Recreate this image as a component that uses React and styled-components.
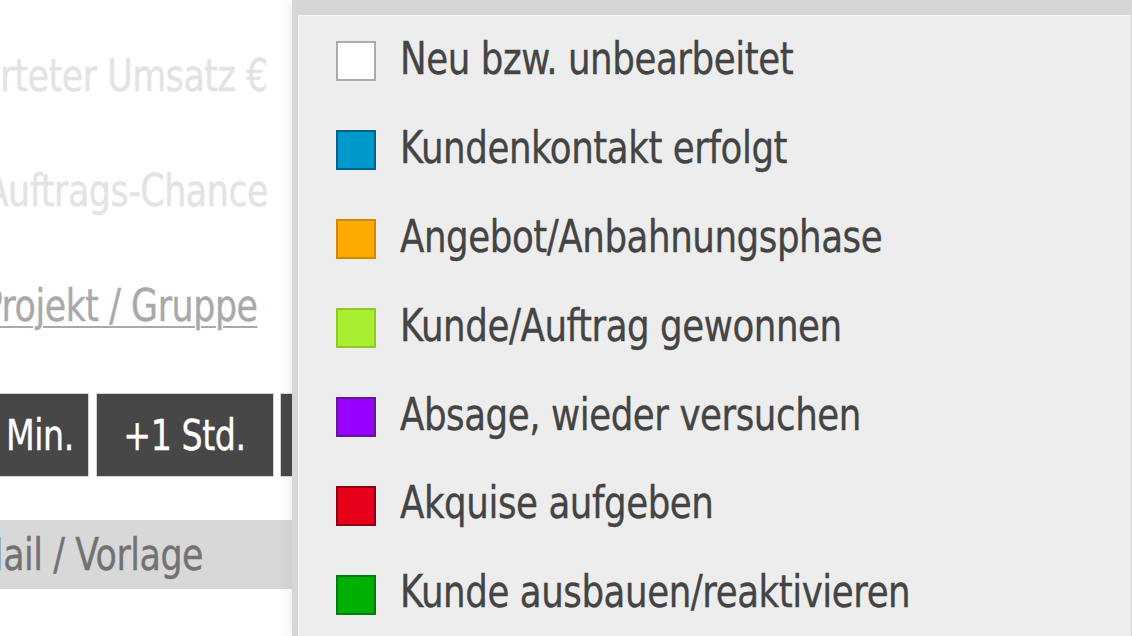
import React from "react";
import styled, { createGlobalStyle } from "styled-components";

const Global = createGlobalStyle`
  html, body { margin: 0; padding: 0; background: #ffffff; }
  body { font-family: "DejaVu Sans Condensed", "DejaVu Sans", sans-serif; font-stretch: condensed; }
`;

const Page = styled.div`
  position: relative;
  width: 1132px;
  height: 636px;
  overflow: hidden;
  background: #ffffff;
`;

const LeftPane = styled.div`
  width: 292px;
  height: 100%;
  overflow: hidden;
  display: flex;
  flex-direction: column;
  padding-top: 18px;
  box-sizing: border-box;
`;

const Narrow = styled.span`
  display: inline-block;
  white-space: nowrap;
  letter-spacing: -0.5px;
  transform: scaleX(0.88);
  transform-origin: ${(p) => p.$origin || "left center"};
  -webkit-text-stroke: 0.35px currentColor;
`;

const LabelRow = styled.div`
  height: 115px;
  line-height: 115px;
  display: flex;
  justify-content: flex-end;
  padding-right: ${(p) => (p.$link ? "34px" : "24px")};
  white-space: nowrap;
  font-size: 44px;
  color: ${(p) => p.$color};
  flex-shrink: 0;
`;

const LinkText = styled(Narrow)`
  text-decoration: underline;
  text-decoration-thickness: 2px;
  text-underline-offset: 5px;
`;

const ButtonRow = styled.div`
  display: flex;
  gap: 6.5px;
  margin-top: 30px;
  margin-left: -89px;
  flex-shrink: 0;
`;

const TimeButton = styled.div`
  flex: 0 0 178px;
  height: 84px;
  box-sizing: border-box;
  border: 1px solid #d4d4d4;
  background: #474747;
  color: #ffffff;
  font-size: 42px;
  display: flex;
  align-items: center;
  justify-content: center;
  white-space: nowrap;
`;

const MailBar = styled.div`
  margin-top: 43px;
  height: 69px;
  background: #d8d8d8;
  display: flex;
  align-items: center;
  justify-content: flex-end;
  padding-right: 89px;
  white-space: nowrap;
  color: #727272;
  font-size: 44px;
  flex-shrink: 0;
`;

const Dropdown = styled.div`
  position: absolute;
  left: 292px;
  top: 0;
  right: 0;
  bottom: 0;
  background: #d6d6d6;
  padding: 15px 1px 0 6px;
  box-shadow: -5px 0 9px rgba(0, 0, 0, 0.05);
`;

const Panel = styled.ul`
  list-style: none;
  margin: 0;
  height: 100%;
  box-sizing: border-box;
  background: #ededed;
  border-top: 1px solid #f5f5f5;
  border-left: 1px solid #f3f3f3;
  padding: 1px 0 0 37px;
`;

const Item = styled.li`
  height: 88.9px;
  display: flex;
  align-items: center;
  gap: 24px;
`;

const Swatch = styled.span`
  width: 40px;
  height: 40px;
  box-sizing: border-box;
  background: ${(p) => p.$fill};
  border: 2px solid ${(p) => p.$edge};
  flex-shrink: 0;
`;

const ItemText = styled(Narrow)`
  font-size: 45px;
  color: #444444;
  line-height: 1;
  margin-bottom: 6px;
`;

const statuses = [
  { label: "Neu bzw. unbearbeitet", fill: "#ffffff", edge: "#ababab" },
  { label: "Kundenkontakt erfolgt", fill: "#0099cc", edge: "#00628a" },
  { label: "Angebot/Anbahnungsphase", fill: "#ffaa00", edge: "#d08a00" },
  { label: "Kunde/Auftrag gewonnen", fill: "#aaee33", edge: "#8ccc22" },
  { label: "Absage, wieder versuchen", fill: "#9900ff", edge: "#5e1a8e" },
  { label: "Akquise aufgeben", fill: "#e6001a", edge: "#8e0012" },
  { label: "Kunde ausbauen/reaktivieren", fill: "#00b000", edge: "#007a12" },
];

export default function App() {
  return (
    <Page>
      <Global />
      <LeftPane>
        <LabelRow $color="#e3e3e3">
          <Narrow $origin="right center">Erwarteter Umsatz €</Narrow>
        </LabelRow>
        <LabelRow $color="#e3e3e3">
          <Narrow $origin="right center">Auftrags-Chance</Narrow>
        </LabelRow>
        <LabelRow $color="#a9a9a9" $link>
          <LinkText $origin="right center">Projekt / Gruppe</LinkText>
        </LabelRow>
        <ButtonRow>
          <TimeButton><Narrow $origin="center">+15 Min.</Narrow></TimeButton>
          <TimeButton><Narrow $origin="center">+1 Std.</Narrow></TimeButton>
          <TimeButton><Narrow $origin="center">+1 Tag</Narrow></TimeButton>
        </ButtonRow>
        <MailBar>
          <Narrow $origin="right center">E-Mail / Vorlage</Narrow>
        </MailBar>
      </LeftPane>
      <Dropdown>
        <Panel>
          {statuses.map((s) => (
            <Item key={s.label}>
              <Swatch $fill={s.fill} $edge={s.edge} />
              <ItemText>{s.label}</ItemText>
            </Item>
          ))}
        </Panel>
      </Dropdown>
    </Page>
  );
}
